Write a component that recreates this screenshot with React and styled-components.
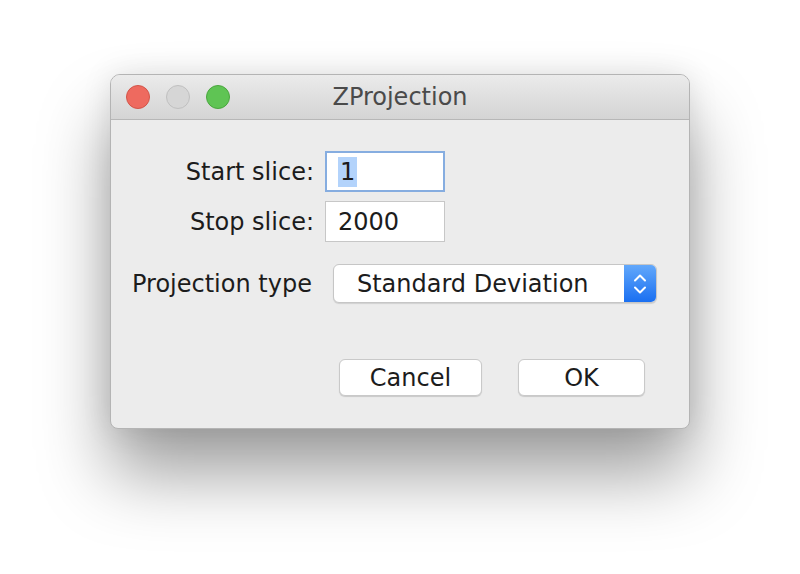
import React from "react";
import styled, { createGlobalStyle } from "styled-components";

const GlobalStyle = createGlobalStyle`
  html, body {
    margin: 0;
    padding: 0;
    background: #ffffff;
  }
  body {
    font-family: "DejaVu Sans", "Liberation Sans", sans-serif;
  }
`;

const Page = styled.div`
  width: 800px;
  height: 574px;
  display: flex;
  justify-content: center;
  align-items: flex-start;
  padding-top: 74px;
  box-sizing: border-box;
  overflow: hidden;
`;

const Window = styled.div`
  width: 580px;
  height: 355px;
  border-radius: 10px 10px 8px 8px;
  background: #ececec;
  border: 1px solid #b4b4b4;
  box-sizing: border-box;
  display: flex;
  flex-direction: column;
  box-shadow: 0 45px 70px rgba(0, 0, 0, 0.38), 0 0 30px rgba(0, 0, 0, 0.1);
`;

const TitleBar = styled.div`
  height: 44px;
  flex-shrink: 0;
  display: flex;
  align-items: center;
  position: relative;
  border-radius: 9px 9px 0 0;
  background: linear-gradient(#ebebeb, #d4d4d4);
  border-bottom: 1px solid #b7b7b7;
  padding-left: 15px;
  gap: 16px;
`;

const Light = styled.span`
  width: 24px;
  height: 24px;
  border-radius: 50%;
  box-sizing: border-box;
  background: ${(p) => p.$fill};
  border: 1px solid ${(p) => p.$edge};
`;

const Title = styled.div`
  position: absolute;
  left: 0;
  right: 0;
  text-align: center;
  font-size: 24px;
  color: #4a4a4a;
  pointer-events: none;
`;

const Body = styled.div`
  flex: 1;
  display: flex;
  flex-direction: column;
  padding: 31px 0 0 0;
`;

const SliceGrid = styled.div`
  display: grid;
  grid-template-columns: 203px 120px;
  column-gap: 11px;
  row-gap: 9px;
  align-items: center;
`;

const Label = styled.div`
  font-size: 24px;
  color: #1c1c1c;
  text-align: ${(p) => p.$align || "right"};
  white-space: nowrap;
`;

const Field = styled.div`
  height: 41px;
  box-sizing: border-box;
  background: #fff;
  border: ${(p) => (p.$focused ? "2px solid #86ade0" : "1px solid #c7c7c7")};
  display: flex;
  align-items: center;
  padding-left: ${(p) => (p.$focused ? "11px" : "12px")};
  font-size: 24px;
  color: #1c1c1c;
`;

const Selected = styled.span`
  background: #b3d3fb;
  padding: 0 2px;
  line-height: 30px;
`;

const TypeRow = styled.div`
  display: flex;
  align-items: center;
  margin-top: 22px;
  padding-left: 21px;
  gap: 21px;
`;

const Select = styled.div`
  width: 324px;
  height: 39px;
  box-sizing: border-box;
  background: #fff;
  border-radius: 6px;
  border: 1px solid #c6c6c6;
  box-shadow: 0 1px 1px rgba(0, 0, 0, 0.12);
  display: flex;
  align-items: center;
  overflow: hidden;
`;

const SelectText = styled.div`
  flex: 1;
  padding-left: 23px;
  font-size: 24px;
  color: #1c1c1c;
`;

const Stepper = styled.div`
  width: 32px;
  height: 100%;
  background: linear-gradient(#62a8fb, #1a6ff1);
  display: flex;
  align-items: center;
  justify-content: center;
`;

const Buttons = styled.div`
  display: flex;
  justify-content: flex-end;
  gap: 36px;
  margin-top: 56px;
  padding-right: 44px;
`;

const Button = styled.div`
  width: ${(p) => p.$w}px;
  height: 37px;
  box-sizing: border-box;
  background: #fff;
  border-radius: 6px;
  border: 1px solid #c9c9c9;
  box-shadow: 0 1px 1px rgba(0, 0, 0, 0.15);
  display: flex;
  align-items: center;
  justify-content: center;
  font-size: 24px;
  color: #1c1c1c;
`;

export default function App() {
  return (
    <>
      <GlobalStyle />
      <Page>
        <Window>
          <TitleBar>
            <Light $fill="#ee6a5f" $edge="#d25549" />
            <Light $fill="#d6d6d6" $edge="#c0c0c0" />
            <Light $fill="#5fc454" $edge="#4aa63e" />
            <Title>ZProjection</Title>
          </TitleBar>
          <Body>
            <SliceGrid>
              <Label>Start slice:</Label>
              <Field $focused>
                <Selected>1</Selected>
              </Field>
              <Label>Stop slice:</Label>
              <Field>2000</Field>
            </SliceGrid>
            <TypeRow>
              <Label $align="left">Projection type</Label>
              <Select>
                <SelectText>Standard Deviation</SelectText>
                <Stepper>
                  <svg width="16" height="28" viewBox="0 0 16 28">
                    <path
                      d="M3 10.5 L8 5.5 L13 10.5 M3 17.5 L8 22.5 L13 17.5"
                      fill="none"
                      stroke="#fff"
                      strokeWidth="2"
                      strokeLinecap="round"
                      strokeLinejoin="round"
                    />
                  </svg>
                </Stepper>
              </Select>
            </TypeRow>
            <Buttons>
              <Button $w={143}>Cancel</Button>
              <Button $w={127}>OK</Button>
            </Buttons>
          </Body>
        </Window>
      </Page>
    </>
  );
}
